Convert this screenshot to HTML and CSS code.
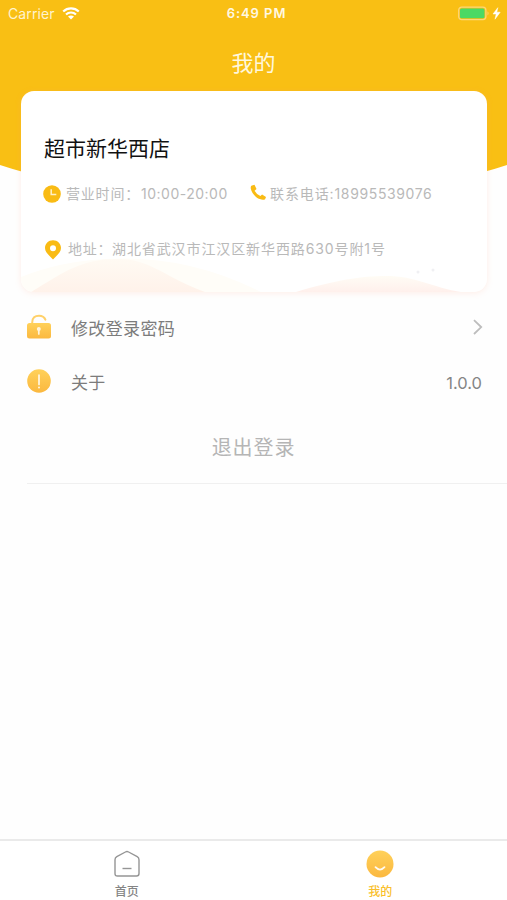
FILE: index.html
```html
<!DOCTYPE html>
<html lang="zh-CN">
<head>
<meta charset="utf-8">
<meta name="viewport" content="width=device-width, initial-scale=1">
<title>我的</title>
<link rel="stylesheet" href="styles.css">
</head>
<body>
<div class="app">
  <header class="hero">
    <svg class="hero-bg" viewBox="0 0 507 190" aria-hidden="true"><path d="M0 0H507V165Q480 174 450 180Q253 205 57 180Q27 174 0 165Z" fill="#f9bf14"/></svg>
    <div class="status">
      <div class="carrier"><span>Carrier</span>
        <svg width="18" height="13" viewBox="0 0 18 13" fill="none" stroke="#fff" stroke-width="2.2"><path d="M1.2 4.5C5.6.3 12.4.3 16.8 4.5M4 7.5C6.8 4.8 11.2 4.8 14 7.5"/><path d="M9 12.5L6 9.6Q9 7.2 12 9.6Z" fill="#fff" stroke="none"/></svg>
      </div>
      <span class="time">6:49 PM</span>
      <div class="power">
        <svg width="43" height="15" viewBox="0 0 43 15"><rect x=".7" y="1.2" width="27.2" height="12.4" rx="3" fill="none" stroke="#fcd778" stroke-width="1.3"/><rect x="2" y="2.5" width="24.5" height="9.8" rx="1.6" fill="#4cd964"/><path d="M29.5 5.3Q31.6 7.4 29.5 9.5Z" fill="#fcd778"/><path d="M39.8 1.7L35 8h3.2L37 13.2l5.2-7h-3.4Z" fill="#fff" stroke="#fff" stroke-width=".5"/></svg>
      </div>
    </div>
    <h1 class="page-title">我的</h1>
  </header>

  <section class="card">
    <svg class="waves" viewBox="0 0 466 45" aria-hidden="true">
      <defs>
        <linearGradient id="w1" x1="0" y1="0" x2="0" y2="1"><stop offset="0" stop-color="#fffaf3"/><stop offset="1" stop-color="#fff2ea"/></linearGradient>
        <linearGradient id="w2" x1="0" y1="0" x2="0" y2="1"><stop offset="0" stop-color="#fffcf5"/><stop offset="1" stop-color="#fff0ec"/></linearGradient>
      </defs>
      <path d="M0 30Q40 14 85 12Q165 7 240 45H0Z" fill="#fffdf8"/>
      <path d="M10 45C45 24 60 12 97 12C130 12 145 31 184 45Z" fill="url(#w1)"/>
      <path d="M275 45C315 33 340 29 365 29C395 29 410 40 440 45Z" fill="url(#w2)"/>
      <circle cx="397" cy="25" r="1.5" fill="#f0f0f3"/><circle cx="412" cy="23" r="1.5" fill="#f0f0f3"/>
    </svg>
    <h2 class="store">超市新华西店</h2>
    <div class="contacts">
      <div class="info hours">
        <svg width="18" height="18" viewBox="0 0 18 18"><circle cx="9" cy="9" r="8.8" fill="#f9bb14"/><path d="M8.2 4.2v5.3h5.1" fill="none" stroke="#fff0c8" stroke-width="1.5"/></svg>
        <span class="label">营业时间：</span><span class="hours-num">10:00-20:00</span>
      </div>
      <div class="info phone">
        <svg width="17" height="17" viewBox="0 0 17 17"><path d="M1.3 1.8L4.5.8L6.5 5L4.6 6.8Q6.7 10.8 10.4 12L12.1 10.5L16 12.9L15.1 15.3Q13.1 16.4 9.7 15.1C5.3 13.4 1.5 8.7.8 4.8Q.5 2.7 1.3 1.8Z" fill="#f9bb14"/></svg>
        <span class="label">联系电话:</span><span class="phone-num">18995539076</span>
      </div>
    </div>
    <div class="info address">
      <svg width="18" height="20" viewBox="0 0 18 20"><path fill-rule="evenodd" d="M9 .3C4.4.3 1 3.7 1 8C1 12.4 5.6 15.8 9 19.6C12.4 15.8 17 12.4 17 8C17 3.7 13.6.3 9 .3ZM9 5.3a3 3 0 1 1 0 6a3 3 0 0 1 0-6Z" fill="#f9bb14"/></svg>
      <span class="label">地址：</span><span class="street">湖北省武汉市江汉区新华西路630号附1号</span>
    </div>
  </section>

  <main class="menu">
    <div class="row">
      <svg class="row-icon" width="24" height="25" viewBox="0 0 24 25"><defs><linearGradient id="gold" x1="0" y1="0" x2="0" y2="1"><stop offset="0" stop-color="#ffd15a"/><stop offset="1" stop-color="#fbb83f"/></linearGradient></defs><path d="M5.2 10V8.5C5.2 3.8 8 1.7 12 1.7C15.5 1.7 17.4 3.1 18.4 5.7" fill="none" stroke="#ffd16a" stroke-width="2" stroke-linecap="round"/><rect y="9" width="24" height="15.5" rx="2.5" fill="url(#gold)"/><circle cx="11.8" cy="15" r="2" fill="#fff4dc"/><path d="M11.8 16v4" stroke="#fff4dc" stroke-width="1.7" stroke-linecap="round"/></svg>
      <span class="row-name">修改登录密码</span>
      <svg class="chevron" width="12" height="18" viewBox="0 0 12 18"><path d="M2 2.2L9.2 9.1L2 16" fill="none" stroke="#bdbdbd" stroke-width="1.8"/></svg>
    </div>
    <div class="row">
      <svg class="row-icon" width="24" height="24" viewBox="0 0 24 24"><circle cx="12" cy="12" r="11.8" fill="url(#gold)"/><path d="M12 6v9.5" stroke="#fff7e5" stroke-width="1.7" stroke-linecap="round"/><circle cx="12" cy="18.4" r="1" fill="#fff7e5"/></svg>
      <span class="row-name">关于</span>
      <span class="version">1.0.0</span>
    </div>
    <div class="logout">退出登录</div>
  </main>

  <nav class="tabs">
    <div class="tab">
      <svg width="28" height="28" viewBox="0 0 28 28"><path d="M3.8 6.7L12.4 2Q14 1.1 15.6 2L24.2 6.7Q26 7.7 26 9.7V23.5Q26 26 23.5 26H4.5Q2 26 2 23.5V9.7Q2 7.7 3.8 6.7Z" fill="none" stroke="#959595" stroke-width="1.4"/><path d="M9.5 18.5h9" stroke="#959595" stroke-width="1.4"/></svg>
      <span>首页</span>
    </div>
    <div class="tab active">
      <svg width="28" height="28" viewBox="0 0 28 28"><circle cx="14" cy="14" r="13.5" fill="url(#gold)"/><path d="M9.5 17.2Q14 22 18.5 17.2" fill="none" stroke="#fffaf0" stroke-width="1.8" stroke-linecap="round"/></svg>
      <span>我的</span>
    </div>
  </nav>
</div>
</body>
</html>
```
FILE: styles.css
```css
* { box-sizing: border-box; }
body {
  margin: 0;
  background: #fefefe;
  font-family: Inter, "Noto Sans CJK SC", sans-serif;
}
svg { display: block; flex: none; }
.app {
  position: relative;
  display: flex;
  flex-direction: column;
  height: 900px;
  overflow: hidden;
}
.hero { height: 91px; color: #fff; }
.hero-bg { position: absolute; top: 0; left: 0; width: 507px; height: 190px; }
.status {
  position: relative;
  display: grid;
  grid-template-columns: 1fr auto 1fr;
  align-items: center;
  height: 26px;
  padding: 0 6px 0 8px;
}
.carrier { display: flex; align-items: center; gap: 7px; font-size: 14px; letter-spacing: 0.1px; color: #fff3cf; }
.time { font-size: 13px; font-weight: 600; letter-spacing: 0.95px; color: #fff8e3; margin-left: 4px; }
.power { justify-self: end; }
.page-title {
  position: relative;
  margin: 22px 0 0;
  text-align: center;
  font-size: 22px;
  line-height: 30px;
  font-weight: 400;
  color: #fff7dd;
}
.card {
  position: relative;
  flex: none;
  width: 466px;
  height: 201px;
  margin-left: 21px;
  padding: 43px 0 0 23px;
  border-radius: 13px;
  background: #fff;
  box-shadow: 0 1px 6px rgba(255, 160, 130, 0.18);
}
.waves { position: absolute; left: 0; bottom: 0; width: 466px; height: 45px; border-radius: 0 0 13px 13px; }
.store {
  position: relative;
  margin: 0;
  font-size: 21px;
  line-height: 30px;
  font-weight: 400;
  color: #111;
}
.contacts { display: flex; margin-top: 19px; }
.info {
  position: relative;
  display: flex;
  align-items: center;
  height: 22px;
  font-size: 14px;
  line-height: 22px;
  white-space: nowrap;
  color: #b9b9b9;
}
.info > svg { margin-left: -1px; }
.hours { width: 207px; }
.hours .label { margin-left: 5px; width: 75px; letter-spacing: 0.8px; }
.hours-num { letter-spacing: 0.5px; }
.phone > svg { margin-bottom: 3px; }
.phone .label { margin-left: 3px; letter-spacing: 0.9px; }
.phone-num { letter-spacing: 0.62px; }
.address { margin-top: 33px; }
.address > svg { margin-left: 0; margin-top: 1px; }
.address .label { margin-left: 6px; width: 44px; letter-spacing: 0.7px; }
.street { letter-spacing: 0.9px; }
.menu { flex: 1; padding-top: 8px; }
.row {
  display: flex;
  align-items: center;
  height: 54px;
  padding: 0 25px 0 27px;
  color: #7c7c7c;
}
.row-icon { margin-top: -1px; }
.row-name { margin-left: 20px; font-size: 17px; letter-spacing: 0.35px; }
.chevron { margin-left: auto; margin-right: -2px; }
.version { margin: 3px 0 0 auto; font-size: 16.5px; color: #858585; }
.logout {
  height: 76px;
  margin-left: 27px;
  padding-right: 27px;
  border-bottom: 1px solid #f0f0f0;
  text-align: center;
  font-size: 20px;
  line-height: 80px;
  letter-spacing: 0.9px;
  color: #b5b5b5;
}
.tabs {
  display: flex;
  height: 61px;
  border-top: 2px solid #eaeaea;
  background: #fff;
}
.tab {
  flex: 1;
  display: flex;
  flex-direction: column;
  align-items: center;
  padding-top: 9px;
  font-size: 12px;
  line-height: 18px;
  font-weight: 500;
  color: #858585;
}
.tab span { margin-top: 5px; }
.active { color: #f9bf2c; }
```
